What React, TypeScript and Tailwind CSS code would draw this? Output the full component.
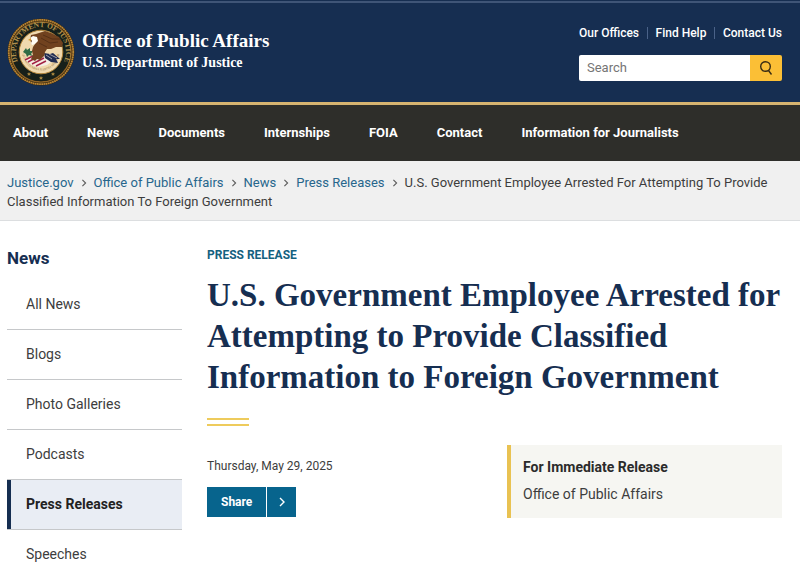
import { Fragment } from "react";

const topLinks = ["Our Offices", "Find Help", "Contact Us"];

const navItems = [
  "About",
  "News",
  "Documents",
  "Internships",
  "FOIA",
  "Contact",
  "Information for Journalists",
];

const crumbs = ["Justice.gov", "Office of Public Affairs", "News", "Press Releases"];

const sideItems = [
  "All News",
  "Blogs",
  "Photo Galleries",
  "Podcasts",
  "Press Releases",
  "Speeches",
];

function Chevron({ className }: { className: string }) {
  return (
    <svg viewBox="0 0 6 10" fill="none" stroke="currentColor" strokeWidth="1.4" className={className} aria-hidden="true">
      <path d="M1 1l4 4-4 4" />
    </svg>
  );
}

function Seal() {
  return (
    <svg viewBox="0 0 68 68" className="size-17 shrink-0" role="img" aria-label="Department of Justice seal">
      <defs>
        <path id="seal-top" d="M14 49 A25 25 0 1 1 54 49" />
        <path id="seal-motto" d="M15.5 34 A18.5 18.5 0 0 0 52.5 34" />
      </defs>
      <circle cx="34" cy="34" r="33.5" fill="#33270f" />
      <circle cx="34" cy="34" r="32.2" fill="none" stroke="#bb8535" strokeWidth="1.8" strokeDasharray="1.8 0.4" />
      <circle cx="34" cy="34" r="30" fill="none" stroke="#8f6428" strokeWidth="1.4" />
      <circle cx="34" cy="34" r="29.2" fill="#17201a" />
      <text fontFamily="Liberation Serif, serif" fontSize="7.5" fontWeight="700" fill="#b0904c">
        <textPath href="#seal-top" startOffset="50%" textAnchor="middle">DEPARTMENT OF JUSTICE</textPath>
      </text>
      <circle cx="34" cy="34" r="21.8" fill="#f0d9ae" stroke="#b08339" strokeWidth="1" />
      <text fontFamily="Liberation Serif, serif" fontSize="3" fill="#8a6a3a">
        <textPath href="#seal-motto" startOffset="50%" textAnchor="middle">QUI PRO DOMINA JUSTITIA SEQUITUR</textPath>
      </text>
      {/* shield stripes */}
      <path d="M18 42l16-6 10 8-4 3-9 2-6-2z" fill="#f6eee4" />
      <g stroke="#a32345" strokeWidth="1.5">
        <path d="M18 42l10-5M21 44l13-7M25 46l12-6M29 48l10-5" />
      </g>
      {/* olive branch */}
      <path d="M16 34l3-4 1 2 3-2 0 3 3 0-2 3 2 2-4-1-2 2-1-3z" fill="#2f6b45" />
      {/* arrows */}
      <path d="M37 35l6 1 3-1 7 6-4 0 2 4-7-1-6-4z" fill="#202b50" />
      <path d="M39 37l6 4M42 36l8 4" stroke="#f6eee4" strokeWidth="0.6" />
      {/* eagle */}
      <path d="M24 17l5-1 9-3 6 2 8 4 4 6-1 4-6 0-5 2-4 0-2 3-1 4-4 4-3-1-2 2-4-2 2-4-1-4 1-4 2-3-3 0-2-4z" fill="#71421f" />
      <path d="M34 20l9 5 8-1M36 17l9 4 8 0M32 25l8 4" fill="none" stroke="#4f2c14" strokeWidth="0.8" />
      <path d="M23 20l3-2 4 1 1 4-3 3-3 1-1-2 1-2z" fill="#fffdf5" />
      <path d="M24 20l-3 2 3 1z" fill="#d99a2b" />
      <g fill="#a8863f">
        <path d="M22 54l.6 1.300 1.400.1-1 1 .3 1.400-1.300-.7-1.300.7.300-1.400-1-1 1.400-.1z" />
        <path d="M34 58l.6 1.300 1.400.1-1 1 .3 1.400-1.300-.7-1.300.7.300-1.400-1-1 1.400-.1z" />
        <path d="M46 54l.6 1.300 1.400.1-1 1 .3 1.400-1.300-.7-1.300.7.300-1.400-1-1 1.400-.1z" />
      </g>
    </svg>
  );
}

function Header() {
  return (
    <header className="border-t border-[#162e51] bg-[#162e51] text-white">
      <div className="flex items-start justify-between border-t-2 border-[#3f5577] pb-4 pl-[7px] pr-[18px] pt-[15px]">
        <a href="#" className="flex items-center gap-[7px]">
          <Seal />
          <span className="flex flex-col pb-0.5 font-['Liberation_Serif',serif] font-bold">
            <span className="text-[19px] leading-6">Office of Public Affairs</span>
            <span className="text-sm leading-5">U.S. Department of Justice</span>
          </span>
        </a>
        <div className="w-[203px] pt-[7px]">
          <ul className="flex justify-between text-xs leading-4 font-medium">
            {topLinks.map((label, i) => (
              <Fragment key={label}>
                {i > 0 && <li className="my-0.5 w-px bg-[#4a6288]" aria-hidden="true" />}
                <li>
                  <a href="#">{label}</a>
                </li>
              </Fragment>
            ))}
          </ul>
          <form className="mt-3.5 flex h-[26px] overflow-hidden rounded-xs">
            <input
              type="search"
              aria-label="Search"
              placeholder="Search"
              className="min-w-0 flex-1 bg-white px-2 text-[13px] text-[#1b1b1b] placeholder:text-[#757575]"
            />
            <button type="submit" aria-label="Submit search" className="flex w-8 items-center justify-center bg-[#fbbf36] text-[#3a2d14]">
              <svg viewBox="0 0 14 16" fill="none" stroke="currentColor" strokeWidth="1.4" className="h-4 w-3.5">
                <circle cx="6.500" cy="6.500" r="4.800" />
                <path d="M9.500 10.500l3 4" />
              </svg>
            </button>
          </form>
        </div>
      </div>
    </header>
  );
}

export default function App() {
  return (
    <div className="min-h-screen bg-white font-[Roboto,sans-serif] text-[#3d3d3d]">
      <Header />
      <nav className="border-t-3 border-[#d6b470] bg-[#2e2e2a]" aria-label="Primary">
        <ul className="flex h-14 items-center gap-[39px] px-[13px] text-[13px] font-bold text-white">
          {navItems.map((item) => (
            <li key={item}>
              <a href="#">{item}</a>
            </li>
          ))}
        </ul>
      </nav>

      <nav className="border-b border-[#dcdee0] bg-[#f0f0f0] px-[7px] pb-[9px] pt-3 text-[13px] leading-[19px]" aria-label="Breadcrumb">
        {crumbs.map((crumb) => (
          <Fragment key={crumb}>
            <a href="#" className="text-[#27668c]">{crumb}</a>
            <Chevron className="mx-[7px] inline-block h-2 w-1.5 align-baseline text-[#5c5c5c]" />
          </Fragment>
        ))}
        <span>U.S. Government Employee Arrested For Attempting To Provide Classified Information To Foreign Government</span>
      </nav>

      <div className="flex gap-[25px] pl-[7px] pr-[18px]">
        <aside className="w-[175px] shrink-0 pt-[25px]">
          <h2 className="text-[17px] leading-6 font-bold text-[#162e51]">News</h2>
          <ul className="mt-2.5 text-sm">
            {sideItems.map((item) => (
              <li key={item} className="border-b border-[#c6c8ca]">
                {item === "Press Releases" ? (
                  <a href="#" aria-current="page" className="flex h-[49px] items-center border-l-4 border-[#162e51] bg-[#e9edf4] pb-0.5 pl-[15px] font-bold text-[#222]">
                    {item}
                  </a>
                ) : (
                  <a href="#" className="flex h-[49px] items-center pb-0.5 pl-[19px]">{item}</a>
                )}
              </li>
            ))}
          </ul>
        </aside>

        <main className="min-w-0 flex-1 pt-6">
          <p className="text-xs leading-5 font-bold text-[#14617f]">PRESS RELEASE</p>
          <h1 className="mt-2.5 font-['Liberation_Serif',serif] text-[33px] leading-[41px] font-bold text-[#162e51]">
            U.S. Government Employee Arrested for Attempting to Provide Classified Information to Foreign Government
          </h1>
          <div className="mt-5 h-2 w-[42px] border-y-2 border-[#eecb5c]" />
          <div className="mt-[19px] flex">
            <div className="flex-1 pt-3">
              <p className="text-xs leading-[18px]">Thursday, May 29, 2025</p>
              <button type="button" className="mt-3 flex h-[30px] items-stretch bg-[#07648d] text-xs font-bold text-white">
                <span className="flex items-center px-3.5">Share</span>
                <span className="flex w-[30px] items-center justify-center border-l border-white">
                  <Chevron className="h-2.5 w-1.5" />
                </span>
              </button>
            </div>
            <section className="w-[275px] self-start border-l-4 border-[#e9c252] bg-[#f6f6f2] px-3 pb-2.5 pt-[9px] text-sm leading-[27px]">
              <h2 className="font-bold text-[#2b2b2b]">For Immediate Release</h2>
              <p>Office of Public Affairs</p>
            </section>
          </div>
        </main>
      </div>
    </div>
  );
}
